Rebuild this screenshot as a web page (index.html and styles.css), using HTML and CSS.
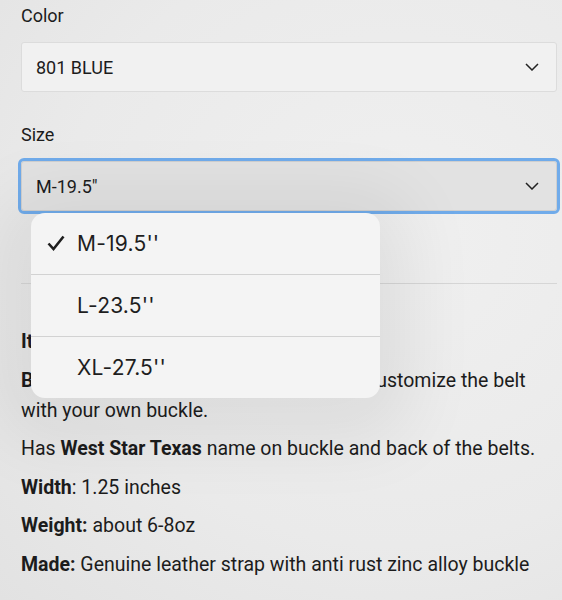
FILE: index.html
```html
<!DOCTYPE html>
<html lang="en">

<head>
  <meta charset="UTF-8">
  <meta name="viewport" content="width=device-width, initial-scale=1.0">
  <title>Belt options</title>
  <link rel="stylesheet" href="styles.css">
</head>

<body>
  <div class="product">
    <div class="option">
      <label class="option-label">Color</label>
      <div class="select">
        <span>801 BLUE</span>
        <svg class="chevron" width="14" height="8" viewBox="0 0 14 8">
          <path d="M1 1l6 6 6-6" />
        </svg>
      </div>
    </div>

    <div class="option">
      <label class="option-label">Size</label>
      <div class="field">
        <div class="select focused">
          <span>M-19.5"</span>
          <svg class="chevron" width="14" height="8" viewBox="0 0 14 8">
            <path d="M1 1l6 6 6-6" />
          </svg>
        </div>

        <ul class="menu">
          <li class="menu-item">
            <svg class="check" width="18" height="16" viewBox="0 0 18 16">
              <path d="M1.5 8.5l5 5.5 10-12.5" />
            </svg>
            M-19.5''
          </li>
          <li class="menu-item">L-23.5''</li>
          <li class="menu-item">XL-27.5''</li>
        </ul>
      </div>
    </div>

    <hr class="divider">

    <div class="description">
      <p><b>Item Description:</b></p>
      <p><b>Buckle:</b> Removable buckles, so you can customize the belt with your own buckle.</p>
      <p>Has <b>West Star Texas</b> name on buckle and back of the belts.</p>
      <p><b>Width</b>: 1.25 inches</p>
      <p><b>Weight:</b> about 6-8oz</p>
      <p><b>Made:</b> Genuine leather strap with anti rust zinc alloy buckle</p>
    </div>
  </div>
</body>

</html>
```

FILE: styles.css
```css
:root {
  --background-color: #efefef;
  --text-color: #1c1c1c;
  --border-color: #dcdcdc;
  --focus-color: #70abea;
  --menu-color: #f4f4f4;
}

body {
  margin: 0;
  padding: 0;
  background: radial-gradient(ellipse at 70% 40%, #f0f0f0 0%, #eaeaea 60%, #e2e2e2 100%);
  color: var(--text-color);
  font-family: Roboto, "Liberation Sans", sans-serif;
  font-size: 18px;
  min-height: 600px;
}

.product {
  padding: 1px 5px 0 21px;
}

.option {
  margin-bottom: 28px;
}

.option-label {
  display: block;
  line-height: 30px;
  margin-bottom: 11px;
}

.field {
  position: relative;
}

.select {
  display: flex;
  align-items: center;
  justify-content: space-between;
  box-sizing: border-box;
  height: 50px;
  padding: 0 17px 0 14px;
  border: 1px solid var(--border-color);
  border-radius: 3px;
  background-color: #f1f1f1;
}

.select.focused {
  background-color: #e2e2e2;
  border-color: #cfcfcf;
  outline: 3px solid var(--focus-color);
  outline-offset: 0;
}

.chevron path {
  fill: none;
  stroke: #222;
  stroke-width: 1.5;
}

.menu {
  position: absolute;
  z-index: 2;
  top: 52px;
  left: 10px;
  width: 349px;
  margin: 0;
  padding: 0;
  list-style: none;
  background-color: var(--menu-color);
  border-radius: 14px;
  box-shadow: 0 12px 70px 30px rgba(0, 0, 0, 0.07);
  font-family: Inter, "Noto Sans", sans-serif;
  font-size: 21px;
  letter-spacing: 0.2px;
  color: #1e1e1e;
}

.menu-item {
  display: flex;
  align-items: center;
  height: 61px;
  padding-left: 46px;
  position: relative;
}

.menu-item+.menu-item {
  border-top: 1px solid #d2d2d2;
}

.check {
  position: absolute;
  left: 16px;
  top: 22px;
}

.check path {
  fill: none;
  stroke: #1e1e1e;
  stroke-width: 2.6;
}

.divider {
  border: none;
  border-top: 1px solid #d6d6d6;
  margin: 72px 0 0;
}

.description {
  padding-top: 43px;
  font-size: 19.5px;
}

.description p {
  margin: 0 0 8.5px;
  line-height: 30px;
}

.description b {
  font-weight: 700;
}
```
